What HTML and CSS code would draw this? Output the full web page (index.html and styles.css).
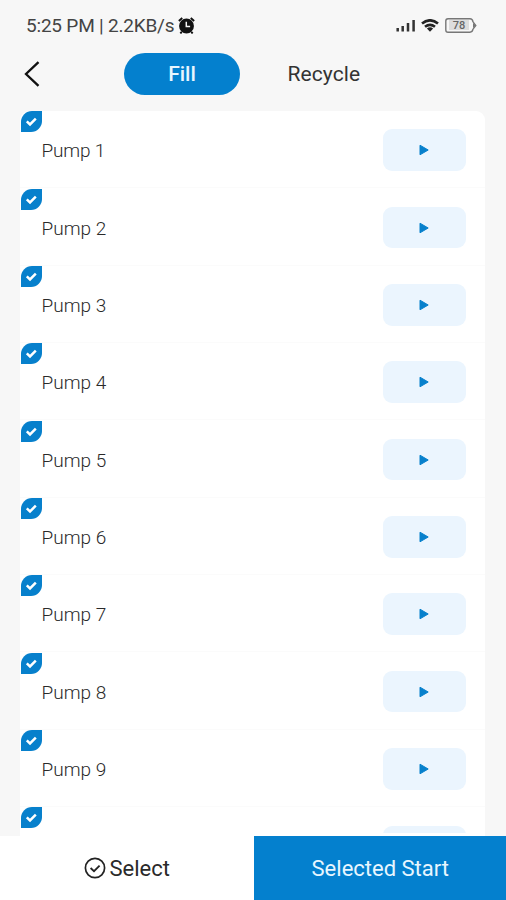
FILE: index.html
```
<!DOCTYPE html>
<html lang="en">
<head>
<meta charset="utf-8">
<title>Pumps</title>
<link rel="stylesheet" href="styles.css">
</head>
<body>
<svg class="defs" width="0" height="0">
  <symbol id="badge" viewBox="0 0 21 21"><path d="M11 0H21V10A11 11 0 0 1 10 21H0V11A11 11 0 0 1 11 0Z" fill="#0780cc"/><path d="M5.8 10.4l3.2 3.1 5.8-5.8" fill="none" stroke="#fff" stroke-width="2.5"/></symbol>
  <symbol id="play" viewBox="0 0 10 12"><path d="M1 1.2L9.2 6 1 10.8Z" fill="#0780cc" stroke="#0780cc" stroke-linejoin="round"/></symbol>
</svg>
<div class="screen">
  <header class="status">
    <span class="clock">5:25 PM | 2.2KB/s</span>
    <svg class="alarm" viewBox="0 0 16 16"><circle cx="8" cy="8.5" r="7" fill="#111"/><path d="M.8 3.7L4 .9M15.2 3.7L12 .9M3.5 14l-1.3 1.5M12.5 14l1.3 1.5" stroke="#111" stroke-width="1.8"/><path d="M7.8 4.5V9h3.6" fill="none" stroke="#f7f7f7" stroke-width="1.4"/></svg>
    <svg class="signal" viewBox="0 0 20 13"><path d="M1.7 9v3.5M6.7 7v5.5M12 4v8.5M17.6 1v11.5" stroke="#333" stroke-width="2.5"/></svg>
    <svg class="wifi" viewBox="0 0 18 13"><path d="M1 4.6Q9-2 17 4.6M4 7.8Q9 3.8 14 7.8" fill="none" stroke="#222" stroke-width="2.6"/><path d="M5.9 9.4Q9 7.3 12.1 9.4L9 12.8Z" fill="#222"/></svg>
    <span class="battery"><span class="level">78</span><svg viewBox="0 0 32 15"><path d="M3 .8H25Q27.5.8 28 3.8L30.8 7.5 28 11.2Q27.5 14.2 25 14.2H3Q.8 14.2.8 12V3Q.8.8 3 .8Z" fill="none" stroke="#777" stroke-width="1.4"/><path d="M28 5l3 2.5-3 2.5Z" fill="#777"/></svg></span>
  </header>
  <nav class="tabs">
    <svg class="back" viewBox="0 0 16 26"><path d="M14.5 1.2L2 13 14.5 24.8" fill="none" stroke="#111" stroke-width="2.3"/></svg>
    <span class="tab active"><span>Fill</span></span>
    <span class="tab recycle">Recycle</span>
  </nav>
  <main class="list">
    <div class="row"><svg class="badge"><use href="#badge"/></svg><span class="name one">Pump 1</span><span class="play"><svg><use href="#play"/></svg></span></div>
    <div class="row"><svg class="badge"><use href="#badge"/></svg><span class="name">Pump 2</span><span class="play"><svg><use href="#play"/></svg></span></div>
    <div class="row"><svg class="badge"><use href="#badge"/></svg><span class="name">Pump 3</span><span class="play"><svg><use href="#play"/></svg></span></div>
    <div class="row"><svg class="badge"><use href="#badge"/></svg><span class="name">Pump 4</span><span class="play"><svg><use href="#play"/></svg></span></div>
    <div class="row"><svg class="badge"><use href="#badge"/></svg><span class="name">Pump 5</span><span class="play"><svg><use href="#play"/></svg></span></div>
    <div class="row"><svg class="badge"><use href="#badge"/></svg><span class="name">Pump 6</span><span class="play"><svg><use href="#play"/></svg></span></div>
    <div class="row"><svg class="badge"><use href="#badge"/></svg><span class="name">Pump 7</span><span class="play"><svg><use href="#play"/></svg></span></div>
    <div class="row"><svg class="badge"><use href="#badge"/></svg><span class="name">Pump 8</span><span class="play"><svg><use href="#play"/></svg></span></div>
    <div class="row"><svg class="badge"><use href="#badge"/></svg><span class="name">Pump 9</span><span class="play"><svg><use href="#play"/></svg></span></div>
    <div class="row"><svg class="badge"><use href="#badge"/></svg><span class="play"></span></div>
  </main>
  <footer class="actions">
    <div class="select"><svg viewBox="0 0 22 22"><circle cx="11" cy="11" r="9.6" fill="none" stroke="#222" stroke-width="1.7"/><path d="M6.6 11l3.4 3.2 5.6-5.6" fill="none" stroke="#222" stroke-width="1.8"/></svg><span>Select</span></div>
    <div class="start"><span>Selected Start</span></div>
  </footer>
</div>
</body>
</html>
```
FILE: styles.css
```
* { box-sizing: border-box; }
body { margin: 0; background: #f7f7f7; font-family: Roboto, "Liberation Sans", sans-serif; color: #2a2a2a; }
svg { display: block; flex: none; }
.defs { position: absolute; }
.screen { width: 506px; height: 900px; display: flex; flex-direction: column; overflow: hidden; }
.status { height: 50px; flex: none; display: flex; align-items: center; padding: 0 29px 0 26px; }
.clock { width: 152px; font-size: 19px; letter-spacing: -0.2px; white-space: nowrap; color: #444; }
.alarm { width: 17px; height: 17px; }
.signal { width: 20px; height: 13px; margin-left: auto; }
.wifi { width: 18px; height: 13px; margin-left: 5px; }
.battery { width: 32px; height: 15px; margin-left: 6px; position: relative; }
.battery svg { width: 32px; height: 15px; }
.level { position: absolute; left: 4px; top: 2.5px; width: 20px; height: 10px; background: #ddd; font-size: 11px; line-height: 11px; font-weight: 500; text-align: center; color: #666; }
.tabs { height: 61px; flex: none; display: flex; align-items: flex-start; padding: 3px 0 0 24px; }
.back { width: 16px; height: 26px; margin-top: 8px; }
.tab { height: 42px; display: flex; align-items: center; justify-content: center; font-size: 21px; }
.active { width: 116px; margin-left: 84px; border-radius: 21px; background: #0480ce; color: #e8f6ff; font-weight: 500; }
.recycle { margin-left: 47.5px; letter-spacing: 0.1px; color: #333; }
.list { flex: 1; min-height: 0; margin: 0 21px 0 20px; border-radius: 9px 9px 0 0; border-bottom: 3px solid #fff; background: #fff; overflow: hidden; }
.row { height: 77.35px; position: relative; display: flex; align-items: center; justify-content: space-between; padding: 1px 19.5px 0 21.5px; border-bottom: 1px solid #fbfbfb; }
.row:last-child { justify-content: flex-end; }
.badge { position: absolute; left: 1px; top: 0.3px; width: 21px; height: 21px; }
.name { font-size: 19px; font-weight: 300; margin-top: 2px; }
.one { letter-spacing: -0.2px; }
.play { width: 82.5px; height: 41.5px; margin-top: 1px; border-radius: 9px; background: #ebf5fe; display: flex; align-items: center; justify-content: center; }
.play svg { width: 10px; height: 12px; }
.actions { height: 64.5px; flex: none; display: flex; font-size: 22px; }
.select { width: 253.5px; background: #fff; display: flex; align-items: center; justify-content: center; gap: 4px; padding-top: 1px; }
.select svg { width: 22px; height: 22px; margin-top: -1px; }
.start { flex: 1; background: #0480ce; color: #e8f6ff; display: flex; align-items: center; justify-content: center; padding: 1px 0 0 1px; }
```
